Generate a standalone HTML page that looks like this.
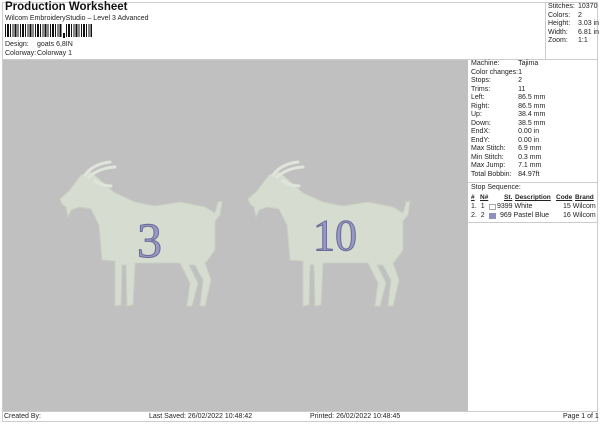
<!DOCTYPE html>
<html><head><style>
*{margin:0;padding:0;box-sizing:border-box}
body{width:600px;height:424px;background:#fff;font-family:"Liberation Sans",sans-serif;color:#222;position:relative;overflow:hidden;font-size:7px}
.a{position:absolute;white-space:nowrap}
.frame{position:absolute;left:2px;top:2px;width:596px;height:420px;border:1px solid #ccc}
.gray{position:absolute;left:3px;top:60px;width:465px;height:351px;background:#c0c0c0}
table{border-collapse:collapse}
td{padding:0;height:8.5px;line-height:8.5px;font-size:7px}
.h{font-weight:bold;text-decoration:underline;font-size:6.5px}
</style></head><body>
<div class="frame"></div>
<div class="a" style="left:5px;top:1px;font-size:11.5px;font-weight:bold;color:#111">Production Worksheet</div>
<div class="a" style="left:5px;top:15px">Wilcom EmbroideryStudio – Level 3 Advanced</div>
<div class="a" style="left:5px;top:24px;width:57px;height:13px;background:repeating-linear-gradient(90deg,#111 0 1px,#fff 1px 2px,#111 2px 4px,#fff 4px 5px,#111 5px 6px,#fff 6px 7.5px)"></div>
<div class="a" style="left:63px;top:33px;width:2px;height:5px;background:#111"></div>
<div class="a" style="left:66px;top:24px;width:26px;height:13px;background:repeating-linear-gradient(90deg,#111 0 1px,#fff 1px 2px,#111 2px 4px,#fff 4px 5px,#111 5px 6px,#fff 6px 7.5px)"></div>
<div class="a" style="left:5px;top:41px">Design:</div><div class="a" style="left:37px;top:41px">goats 6,8IN</div>
<div class="a" style="left:5px;top:50px">Colorway:</div><div class="a" style="left:37px;top:50px">Colorway 1</div>
<div class="a" style="left:545px;top:2px;width:1px;height:58px;background:#ccc"></div>
<div class="a" style="left:3px;top:59px;width:595px;height:1px;background:#ccc"></div>
<table class="a" style="left:548px;top:3px">
<tr><td style="width:30px">Stitches:</td><td>10370</td></tr>
<tr><td>Colors:</td><td>2</td></tr>
<tr><td>Height:</td><td>3.03 in</td></tr>
<tr><td>Width:</td><td>6.81 in</td></tr>
<tr><td>Zoom:</td><td>1:1</td></tr></table>
<div class="gray"></div>
<table class="a" style="left:471px;top:60px">
<tr><td style="width:47px">Machine:</td><td>Tajima</td></tr>
<tr><td>Color changes:</td><td>1</td></tr>
<tr><td>Stops:</td><td>2</td></tr>
<tr><td>Trims:</td><td>11</td></tr>
<tr><td>Left:</td><td>86.5 mm</td></tr>
<tr><td>Right:</td><td>86.5 mm</td></tr>
<tr><td>Up:</td><td>38.4 mm</td></tr>
<tr><td>Down:</td><td>38.5 mm</td></tr>
<tr><td>EndX:</td><td>0.00 in</td></tr>
<tr><td>EndY:</td><td>0.00 in</td></tr>
<tr><td>Max Stitch:</td><td>6.9 mm</td></tr>
<tr><td>Min Stitch:</td><td>0.3 mm</td></tr>
<tr><td>Max Jump:</td><td>7.1 mm</td></tr>
<tr><td>Total Bobbin:</td><td>84.97ft</td></tr></table>
<div class="a" style="left:468px;top:182px;width:130px;height:1px;background:#ccc"></div>
<div class="a" style="left:471px;top:184px">Stop Sequence:</div>
<div class="a" style="left:468px;top:222px;width:130px;height:1px;background:#ccc"></div>
<div class="a h" style="left:471px;top:194px">#</div>
<div class="a h" style="left:480px;top:194px">N#</div>
<div class="a h" style="left:504px;top:194px">St.</div>
<div class="a h" style="left:515px;top:194px">Description</div>
<div class="a h" style="left:556px;top:194px">Code</div>
<div class="a h" style="left:575px;top:194px">Brand</div>
<div class="a" style="left:471px;top:203px">1.&nbsp; 1</div>
<div class="a" style="left:489px;top:204px;width:7px;height:6px;border:1px solid #aaa;background:#fff"></div>
<div class="a" style="left:497px;top:203px">9399 White</div>
<div class="a" style="left:563px;top:203px">15 Wilcom</div>
<div class="a" style="left:471px;top:212px">2.&nbsp; 2</div>
<div class="a" style="left:489px;top:213px;width:7px;height:6px;background:#8f8fc4"></div>
<div class="a" style="left:500px;top:212px">969 Pastel Blue</div>
<div class="a" style="left:563px;top:212px">16 Wilcom</div>
<svg class="a" style="left:0;top:0" width="468" height="411">
<defs><g id="goat">
<path d="M5,44 L14,36 L26,20 L36,17 L44,24 L60,38 L80,47 L100,51 L125,47 L150,52 L160,58 L163,47 L167,46 L165,60 L160,66 L160,95 L152,106 L150,108 L156,125 L150,151 L145,151 L148,125 L140,110 L134,110 L143,128 L137,151 L132,151 L135,128 L125,108 L80,108 L78,150 L72,151 L71,110 L67,110 L66,150 L60,151 L60,106 L47,105 L44,70 L36,54 L24,52 L16,55 L13,62 L11,52 L7,49 Z" fill="#d6dcd0" stroke="#c9d0c3" stroke-width="1"/>
<path d="M30,20 Q38,9 55,7 M34,22 Q44,13 60,12 M40,26 Q47,31 56,31" stroke="#dfe5da" stroke-width="3" fill="none" stroke-linecap="round"/>
</g></defs>
<use href="#goat" transform="translate(55,155)"/>
<use href="#goat" transform="translate(243,155)"/>
<text x="137" y="257" font-family="Liberation Serif,serif" font-size="50" fill="#9898c4" stroke="#6a6a98" stroke-width="1">3</text>
<text x="313" y="250" font-family="Liberation Serif,serif" font-size="44" fill="#9898c4" stroke="#6a6a98" stroke-width="1">10</text>
</svg>
<div class="a" style="left:3px;top:411px;width:595px;height:1px;background:#ccc"></div>
<div class="a" style="left:4px;top:413px">Created By:</div>
<div class="a" style="left:149px;top:413px">Last Saved: 26/02/2022 10:48:42</div>
<div class="a" style="left:310px;top:413px">Printed: 26/02/2022 10:48:45</div>
<div class="a" style="left:563px;top:413px">Page 1 of 1</div>
</body></html>
